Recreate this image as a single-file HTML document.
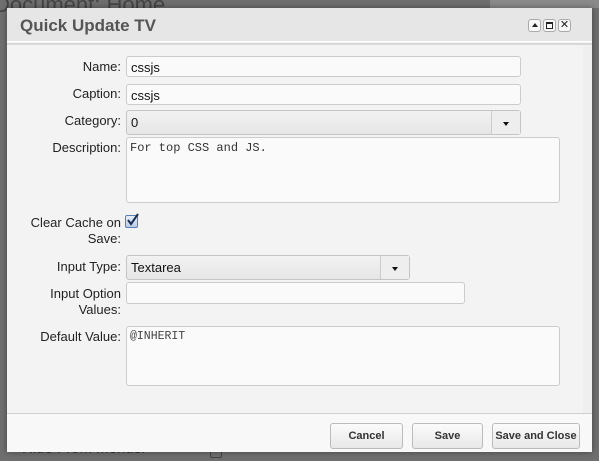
<!DOCTYPE html>
<html><head><meta charset="utf-8"><style>
*{box-sizing:border-box;margin:0;padding:0}
body{width:599px;height:461px;overflow:hidden;background:#6f6f6f;font-family:"Liberation Sans",Arial,sans-serif;position:relative}
.abs{position:absolute}
.bgtxt{color:#444;font-size:22px}
.dlg{left:7px;top:8px;width:585px;height:444px;background:#f3f3f3;box-shadow:0 0 6px rgba(0,0,0,.4)}
.hdr{left:0;top:0;width:585px;height:34px;background:#e6e6e6;border-bottom:1px solid #fff}
.hdr2{left:0;top:35px;width:585px;height:2px;background:#d8d8d8}
.title{left:13px;top:8px;font-size:17px;font-weight:bold;color:#555}
.ctl{top:11px;width:13px;height:13px;border:1px solid #aaa;border-radius:3px;background:#f8f8f8}
.lbl{font-size:13px;color:#222;text-align:right;width:112px;left:2px;line-height:16px}
.inp{background:#fafafa;border:1px solid #ccc;border-radius:3px;font-size:13px;color:#111;padding:3px 4px}
.sel{background:linear-gradient(#f2f2f2,#e6e6e6);border:1px solid #c4c4c4;border-radius:3px;font-size:13px;color:#111;padding:4px 4px}
.arr{position:absolute;right:0;top:0;width:29px;height:100%;border-left:1px solid #ccc;background:#eee}
.arr:after{content:"";position:absolute;left:11px;top:11px;border-left:3px solid transparent;border-right:3px solid transparent;border-top:4px solid #111}
.ta{background:#fafafa;border:1px solid #ccc;border-radius:3px;font-family:"Liberation Mono",monospace;font-size:12px;color:#333;padding:3px 3px}
.ftr{left:0;top:405px;width:585px;height:39px;background:#f8f8f8;border-top:1px solid #d0d0d0}
.btn{top:415px;height:26px;border:1px solid #bbb;border-radius:3px;background:linear-gradient(#fbfbfb,#e8e8e8);font-size:11px;font-weight:bold;color:#333;text-align:center;line-height:24px}
</style></head><body>
<div class="abs bgtxt" style="left:-6px;top:-8px">Document: Home</div>
<div class="abs" style="left:490px;top:0;width:109px;height:8px;background:#8a8a8a"></div>
<div class="abs bgtxt" style="left:22px;top:440px;font-size:15px;color:#333">Hide From Menus:</div>
<div class="abs" style="left:210px;top:446px;width:12px;height:12px;border:1px solid #444;border-radius:2px"></div>
<div class="abs dlg">
 <div class="abs hdr"></div><div class="abs hdr2"></div>
 <div class="abs title">Quick Update TV</div>
 <div class="abs ctl" style="left:521px"><div style="position:absolute;left:3px;top:3px;border-left:3px solid transparent;border-right:3px solid transparent;border-bottom:4px solid #222"></div></div>
 <div class="abs ctl" style="left:536px"><div style="position:absolute;left:2px;top:2px;width:7px;height:7px;border:1px solid #222;border-top-width:2px"></div></div>
 <div class="abs ctl" style="left:551px;font-size:11px;line-height:11px;text-align:center;color:#222">✕</div>
 <div class="abs" style="left:576px;top:37px;width:9px;height:368px;background:#efefef"></div>

 <div class="abs lbl" style="top:51px">Name:</div>
 <div class="abs inp" style="left:119px;top:48px;width:395px;height:21px">cssjs</div>
 <div class="abs lbl" style="top:78px">Caption:</div>
 <div class="abs inp" style="left:119px;top:76px;width:395px;height:21px">cssjs</div>
 <div class="abs lbl" style="top:105px">Category:</div>
 <div class="abs sel" style="left:119px;top:102px;width:395px;height:25px">0<div class="arr"></div></div>
 <div class="abs lbl" style="top:132px">Description:</div>
 <div class="abs ta" style="left:119px;top:129px;width:434px;height:66px">For top CSS and JS.</div>
 <div class="abs lbl" style="top:207px;width:114px;left:0">Clear Cache on<br>Save:</div>
 <div class="abs" style="left:118px;top:207px;width:13px;height:13px;border:1px solid #5a7fb0;border-radius:2px;background:linear-gradient(#e8f0fb,#b9cbe6)">
  <svg width="13" height="13" style="position:absolute;left:0;top:-3px"><path d="M2 7 L5 11 L12 1" stroke="#1b2f55" stroke-width="2" fill="none"/></svg></div>
 <div class="abs lbl" style="top:251px">Input Type:</div>
 <div class="abs sel" style="left:119px;top:247px;width:284px;height:25px">Textarea<div class="arr"></div></div>
 <div class="abs lbl" style="top:278px">Input Option<br>Values:</div>
 <div class="abs inp" style="left:119px;top:274px;width:339px;height:22px"></div>
 <div class="abs lbl" style="top:321px">Default Value:</div>
 <div class="abs ta" style="left:119px;top:318px;width:434px;height:60px;font-size:11.5px;color:#444">@INHERIT</div>

 <div class="abs ftr"></div>
 <div class="abs btn" style="left:323px;width:73px">Cancel</div>
 <div class="abs btn" style="left:405px;width:71px">Save</div>
 <div class="abs btn" style="left:485px;width:88px">Save and Close</div>
</div>
</body></html>
